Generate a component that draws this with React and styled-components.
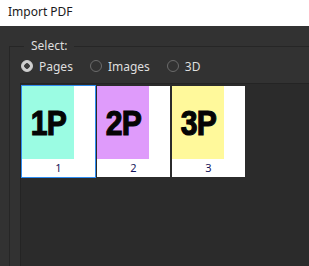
import React, { useState } from "react";
import styled, { createGlobalStyle } from "styled-components";

const GlobalStyle = createGlobalStyle`
  html, body {
    margin: 0;
    padding: 0;
    background: #323232;
    overflow: hidden;
  }
  body {
    font-family: "Noto Sans", "Liberation Sans", sans-serif;
    font-size: 12px;
  }
`;

const pages = [
  { id: 1, color: "#9bfce3" },
  { id: 2, color: "#df9bfb" },
  { id: 3, color: "#fff99b" },
];

function App() {
  const [mode, setMode] = useState("pages");
  const [selected, setSelected] = useState(1);

  return (
    <>
      <GlobalStyle />
      <Window>
        <TitleBar>Import PDF</TitleBar>
        <Body>
          <Group>
            <Legend>Select:</Legend>
            <RadioRow>
              {["Pages", "Images", "3D"].map((label) => (
                <RadioLabel key={label} onClick={() => setMode(label.toLowerCase())}>
                  <Radio checked={mode === label.toLowerCase()} />
                  {label}
                </RadioLabel>
              ))}
            </RadioRow>
            <ThumbArea>
              {pages.map((p) => (
                <Thumb
                  key={p.id}
                  $active={selected === p.id}
                  onClick={() => setSelected(p.id)}
                >
                  <PageImage $bg={p.color}>
                    <PageText>{p.id}P</PageText>
                  </PageImage>
                  <ThumbLabel>{p.id}</ThumbLabel>
                </Thumb>
              ))}
            </ThumbArea>
          </Group>
        </Body>
      </Window>
    </>
  );
}

const Window = styled.div`
  width: 309px;
  height: 266px;
  display: flex;
  flex-direction: column;
  background: #323232;
`;

const TitleBar = styled.div`
  height: 26px;
  line-height: 24px;
  padding-left: 8px;
  background: #ffffff;
  color: #1a1a1a;
  font-size: 12px;
  flex-shrink: 0;
`;

const Body = styled.div`
  flex: 1;
  padding: 12px 0 0 9px;
  display: flex;
  min-height: 0;
`;

const Group = styled.fieldset`
  flex: 1;
  margin: 0;
  padding: 0 0 0 10px;
  border: 1px solid #262626;
  border-right: none;
  border-bottom: none;
  display: flex;
  flex-direction: column;
  min-width: 0;
`;

const Legend = styled.legend`
  margin-left: 4px;
  padding: 0 6px 0 7px;
  color: #dedede;
  font-size: 12px;
  line-height: 16px;
`;

const RadioRow = styled.div`
  display: flex;
  align-items: center;
  gap: 17px;
  height: 24px;
  padding-left: 1px;
`;

const RadioLabel = styled.label`
  display: flex;
  align-items: center;
  gap: 6px;
  color: #dedede;
  font-size: 12px;
  cursor: pointer;
`;

const Radio = styled.span`
  width: 12px;
  height: 12px;
  box-sizing: border-box;
  border-radius: 50%;
  border: 1px solid ${(p) => (p.checked ? "#cfcfcf" : "#6b6b6b")};
  background: ${(p) =>
    p.checked
      ? "radial-gradient(circle, #3c3c3c 0 2.5px, #cfcfcf 3px)"
      : "transparent"};
`;

const ThumbArea = styled.div`
  flex: 1;
  margin-top: 5px;
  background: #2b2b2b;
  border-top: 1px solid #242424;
  border-left: 1px solid #242424;
  padding-top: 1px;
  display: flex;
  align-items: flex-start;
`;

const Thumb = styled.div`
  width: 75px;
  height: 93px;
  box-sizing: border-box;
  border: 1px solid ${(p) => (p.$active ? "#2f8cf0" : "#2b2b2b")};
  background: #ffffff;
  display: flex;
  flex-direction: column;
  cursor: pointer;
`;

const PageImage = styled.div`
  width: 52px;
  height: 73px;
  background: ${(p) => p.$bg};
  display: flex;
  align-items: center;
  justify-content: center;
  overflow: hidden;
`;

const PageText = styled.span`
  font-family: "Liberation Sans", Arial, sans-serif;
  font-weight: 700;
  font-size: 35px;
  color: #050505;
  letter-spacing: -1px;
  -webkit-text-stroke: 1.2px #050505;
  transform: scaleX(0.86);
  margin-top: 1px;
`;

const ThumbLabel = styled.div`
  flex: 1;
  text-align: center;
  color: #14145a;
  font-size: 11px;
  line-height: 17px;
`;

export default App;
